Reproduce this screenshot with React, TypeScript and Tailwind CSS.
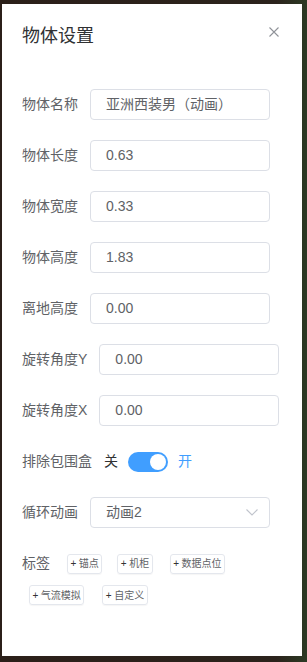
const font = { fontFamily: '"Liberation Sans", "Noto Sans CJK SC", sans-serif' }

const fields = [
  { label: '物体名称', value: '亚洲西装男（动画）' },
  { label: '物体长度', value: '0.63' },
  { label: '物体宽度', value: '0.33' },
  { label: '物体高度', value: '1.83' },
  { label: '离地高度', value: '0.00' },
  { label: '旋转角度Y', value: '0.00' },
  { label: '旋转角度X', value: '0.00' },
]

function Tag({ text, className = '' }: { text: string; className?: string }) {
  return (
    <span
      className={
        'h-[20px] flex items-center px-[2.5px] border border-[#e4e7ed] rounded-[3px] text-[10px] text-[#606266] whitespace-nowrap shadow-[0_1px_1px_rgba(0,0,0,0.04)] ' +
        className
      }
    >
      <span className="text-[#333]">+</span>
      <span className="ml-[2.5px]">{text}</span>
    </span>
  )
}

export default function App() {
  return (
    <div
      className="w-[307px] h-[662px] overflow-hidden bg-[linear-gradient(90deg,#2b1f19_0%,#2b231c_90%,#2c3a24_100%)] pt-[4px] pl-[2px]"
      style={font}
    >
      <div className="w-[300px] h-[652px] bg-white pt-[20px] px-[20px]">
        <div className="flex justify-between items-start">
          <div className="text-[18px] leading-[24px] text-[#303133]">物体设置</div>
          <svg className="mt-[3px] mr-[3px]" width="10" height="10" viewBox="0 0 10 10">
            <path d="M0.5 0.5 L9.5 9.5 M9.5 0.5 L0.5 9.5" stroke="#909399" strokeWidth="1.1" fill="none" />
          </svg>
        </div>

        <div className="mt-[41px] flex flex-col gap-[20px]">
          {fields.map((f) => (
            <div key={f.label} className="h-[31px] flex items-center gap-[12px]">
              <span className="text-[14px] text-[#606266] whitespace-nowrap">{f.label}</span>
              <div className="w-[180px] h-[31px] flex items-center border border-[#dcdfe6] rounded-[4px] px-[15px] text-[14px] text-[#606266]">
                {f.value}
              </div>
            </div>
          ))}

          <div className="h-[31px] flex items-center">
            <span className="text-[14px] text-[#606266]">排除包围盒</span>
            <span className="ml-[12px] text-[14px] text-[#303133]">关</span>
            <div className="ml-[10px] w-[40px] h-[20px] rounded-full bg-[#409eff] flex items-center justify-end pr-[2px]">
              <div className="w-[16px] h-[16px] rounded-full bg-white" />
            </div>
            <span className="ml-[10px] text-[14px] text-[#409eff]">开</span>
          </div>

          <div className="h-[31px] flex items-center gap-[12px]">
            <span className="text-[14px] text-[#606266]">循环动画</span>
            <div className="w-[180px] h-[31px] flex items-center justify-between border border-[#dcdfe6] rounded-[4px] pl-[15px] pr-[11px] text-[14px] text-[#606266]">
              <span>动画2</span>
              <svg width="12" height="7" viewBox="0 0 12 7">
                <path d="M0.5 0.5 L6 6 L11.5 0.5" stroke="#c0c4cc" strokeWidth="1.1" fill="none" />
              </svg>
            </div>
          </div>

          <div>
            <div className="h-[31px] flex items-center">
              <span className="text-[14px] text-[#606266]">标签</span>
              <Tag text="锚点" className="ml-[17px]" />
              <Tag text="机柜" className="ml-[15px]" />
              <Tag text="数据点位" className="ml-[17px]" />
            </div>
            <div className="mt-[6px] flex items-center">
              <Tag text="气流模拟" className="ml-[7px]" />
              <Tag text="自定义" className="ml-[18px]" />
            </div>
          </div>
        </div>
      </div>
    </div>
  )
}
